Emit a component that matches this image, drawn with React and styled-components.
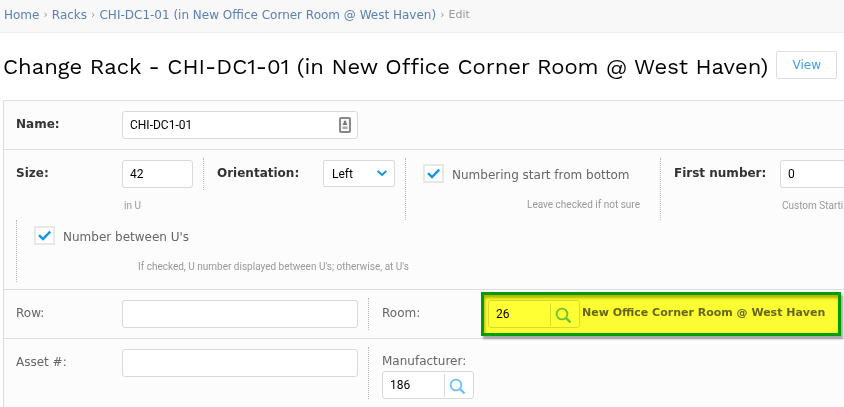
import React from 'react';
import styled, { createGlobalStyle } from 'styled-components';

const sans = '"DejaVu Sans", Verdana, sans-serif';
const field = 'Roboto, sans-serif';

const GlobalStyle = createGlobalStyle`
  *, *::before, *::after { box-sizing: border-box; }
  body {
    margin: 0;
    overflow-x: hidden;
    background: #fff;
    color: #666;
    font: 12px/16px ${sans};
  }
`;

const Breadcrumbs = styled.nav`
  display: flex;
  gap: 4px;
  padding: 7px 4px 9px;
  border-bottom: 1px solid #eee;
  background: #f8f8f8;
  color: #999;
  font-size: 11px;
  white-space: nowrap;
`;

const Crumb = styled.a`
  color: #5b80b2;
  font-size: 12px;
  text-decoration: none;
`;

const Header = styled.header`
  display: flex;
  align-items: flex-start;
  gap: 8px;
  padding: 18px 3px 17px;
`;

const Title = styled.h1`
  margin: 0;
  color: #000;
  font: 400 22px/32px "Work Sans", Inter, sans-serif;
  white-space: nowrap;
`;

const ViewButton = styled.button`
  width: 61px;
  height: 28px;
  padding: 0;
  border: 1px solid #ddd;
  border-radius: 2px;
  background: #fff;
  color: #3d9fe8;
  font: 12px ${sans};
`;

const Module = styled.form`
  margin-left: 3px;
  border: 1px solid #ddd;
  border-right: 0;
  border-radius: 2px 0 0 0;
  background: #fcfcfc;
`;

const Row = styled.div`
  padding: 8px 0 ${(p) => (p.$clip ? '7px' : '8px')} 12px;
  overflow: ${(p) => (p.$clip ? 'hidden' : 'visible')};
  & + & { border-top: 1px solid #ddd; }
`;

const Line = styled.div`
  display: flex;
  align-items: flex-start;
  min-height: ${(p) => (p.$tall ? '62px' : '32px')};
`;

const Cell = styled.div`
  flex: none;
  width: ${(p) => p.$width || 'auto'};
  min-height: ${(p) => (p.$tall ? '62px' : '32px')};
  padding: 2px 0 0 ${(p) => (p.$divided ? '13px' : '0')};
  border-left: ${(p) => (p.$divided ? '1px dotted #bbb' : '0')};
`;

const Field = styled.div`
  display: flex;
  flex-direction: ${(p) => (p.$stacked ? 'column' : 'row')};
  align-items: flex-start;
`;

const Label = styled.label`
  flex: none;
  width: 106px;
  padding-top: ${(p) => (p.$stacked ? '4px' : '5px')};
  padding-bottom: 2px;
  color: ${(p) => (p.$required ? '#333' : '#666')};
  font-weight: ${(p) => (p.$required ? 700 : 400)};
`;

const TextInput = styled.input`
  width: ${(p) => p.$width};
  height: 28px;
  padding: 0 7px;
  border: 1px solid #d9d9d9;
  border-radius: 3px;
  background: #fff;
  color: #000;
  font: 12px ${field};
`;

const Overlay = styled.span`
  display: inline-grid;
  align-items: center;
  justify-items: end;
  & > * { grid-area: 1 / 1; }
  & > svg { pointer-events: none; margin-right: ${(p) => p.$inset || '0'}; }
`;

const Select = styled.select`
  appearance: none;
  width: 72px;
  height: 27px;
  padding: 0 8px;
  border: 1px solid #d9d9d9;
  border-radius: 2px;
  background: #fff;
  color: #000;
  font: 12px ${field};
`;

const Checkbox = styled.input`
  appearance: none;
  width: 21px;
  height: 19px;
  margin: 0;
  border: 2px solid #e8e8e8;
  background: #fff;
  & + svg { visibility: hidden; }
  &:checked + svg { visibility: visible; }
`;

const CheckField = styled.div`
  display: flex;
  align-items: center;
  gap: 8px;
  padding: 4px 0 0 4px;
`;

const CheckLabel = styled.label`
  padding-top: 3px;
  white-space: nowrap;
`;

const Help = styled.p`
  margin: 0;
  padding: ${(p) => p.$pad};
  color: #999;
  font: 10px/14px ${field};
  white-space: nowrap;
`;

const Lookup = styled.div`
  display: flex;
  align-items: center;
  width: 92px;
  height: 28px;
  border: 1px solid #d9d9d9;
  border-radius: 3px;
  background: #fff;
`;

const LookupInput = styled.input`
  width: 61px;
  height: 26px;
  padding: 0 7px;
  border: 0;
  background: none;
  color: #000;
  font: 12px ${field};
`;

const LookupButton = styled.button`
  display: flex;
  width: 24px;
  height: 23px;
  padding: 4px 0 0 4px;
  border: 0;
  border-left: 1px solid #d9d9d9;
  background: none;
  color: #6fc1ef;
`;

const Highlighted = styled.div`
  position: relative;
  display: flex;
  gap: 2px;
`;

const Marker = styled.div`
  position: absolute;
  inset: -8px -16px -8px -7px;
  border: 3px solid #00a000;
  background: #ffff33;
  mix-blend-mode: multiply;
  box-shadow: 2px 3px 2px #aaa, inset 1px 3px 3px #b5b500;
  pointer-events: none;
`;

const RoomName = styled.strong`
  padding-top: 5px;
  color: #666;
  font-size: 11px;
  white-space: nowrap;
`;

function Tick() {
  return (
    <svg width="21" height="19" viewBox="0 0 21 19" fill="none" stroke="#1593e6" strokeWidth="2.4">
      <path d="M5 9.2 9 13l7.2-7.4" />
    </svg>
  );
}

function Chevron() {
  return (
    <svg width="10" height="7" viewBox="0 0 10 7" fill="none" stroke="#1593e6" strokeWidth="2">
      <path d="m.7 1 4.3 4 4.3-4" />
    </svg>
  );
}

function ContactIcon() {
  return (
    <svg width="12" height="16" viewBox="0 0 12 16">
      <rect x="1" y="1" width="10" height="14" rx="1" fill="#f8f8f8" stroke="#888" strokeWidth="2" />
      <path d="M6 3.5c1 0 1.3 1 1.2 2L8.5 8h-5l1.3-2.5c-.1-1 .2-2 1.2-2Z" fill="#777" />
      <path d="M3.5 9.5h5v2.5h-5z" fill="#aaa" />
    </svg>
  );
}

function Magnifier() {
  return (
    <svg width="17" height="17" viewBox="0 0 17 17" fill="none" stroke="currentColor" strokeWidth="1.8">
      <circle cx="7" cy="7" r="5.4" />
      <path d="m11 11 4.5 4.5" strokeWidth="2.4" />
    </svg>
  );
}

function CheckRow({ id, children }) {
  return (
    <CheckField>
      <Overlay>
        <Checkbox type="checkbox" id={id} defaultChecked />
        <Tick />
      </Overlay>
      <CheckLabel htmlFor={id}>{children}</CheckLabel>
    </CheckField>
  );
}

function LookupField({ id, value, title }) {
  return (
    <Lookup>
      <LookupInput id={id} defaultValue={value} />
      <LookupButton type="button" aria-label={title}>
        <Magnifier />
      </LookupButton>
    </Lookup>
  );
}

export default function App() {
  return (
    <>
      <GlobalStyle />
      <Breadcrumbs aria-label="Breadcrumb">
        <Crumb href="#home">Home</Crumb>
        <span>›</span>
        <Crumb href="#racks">Racks</Crumb>
        <span>›</span>
        <Crumb href="#rack">CHI-DC1-01 (in New Office Corner Room @ West Haven)</Crumb>
        <span>›</span>
        <span>Edit</span>
      </Breadcrumbs>
      <Header>
        <Title>Change Rack - CHI-DC1-01 (in New Office Corner Room @ West Haven)</Title>
        <ViewButton type="button">View</ViewButton>
      </Header>
      <Module>
        <Row>
          <Line>
            <Cell>
              <Field>
                <Label $required htmlFor="name">Name:</Label>
                <Overlay $inset="7px">
                  <TextInput id="name" $width="236px" defaultValue="CHI-DC1-01" />
                  <ContactIcon />
                </Overlay>
              </Field>
            </Cell>
          </Line>
        </Row>
        <Row $clip>
          <Line $tall>
            <Cell $width="187px" $tall>
              <Field>
                <Label $required htmlFor="size">Size:</Label>
                <TextInput id="size" $width="71px" defaultValue="42" />
              </Field>
              <Help $pad="11px 0 0 108px">in U</Help>
            </Cell>
            <Cell $width="202px" $divided>
              <Field>
                <Label $required htmlFor="orientation">Orientation:</Label>
                <Overlay $inset="8px">
                  <Select id="orientation" defaultValue="Left">
                    <option>Left</option>
                    <option>Right</option>
                  </Select>
                  <Chevron />
                </Overlay>
              </Field>
            </Cell>
            <Cell $width="255px" $divided $tall>
              <CheckRow id="from-bottom">Numbering start from bottom</CheckRow>
              <Help $pad="15px 0 0 108px">Leave checked if not sure</Help>
            </Cell>
            <Cell $divided $tall>
              <Field>
                <Label $required htmlFor="first">First number:</Label>
                <TextInput id="first" $width="71px" defaultValue="0" />
              </Field>
              <Help $pad="11px 0 0 108px">Custom Starti</Help>
            </Cell>
          </Line>
          <Line $tall>
            <Cell $divided $tall>
              <CheckRow id="between">Number between U's</CheckRow>
              <Help $pad="15px 0 0 108px">If checked, U number displayed between U's; otherwise, at U's</Help>
            </Cell>
          </Line>
        </Row>
        <Row>
          <Line>
            <Cell $width="352px">
              <Field>
                <Label htmlFor="row">Row:</Label>
                <TextInput id="row" $width="236px" />
              </Field>
            </Cell>
            <Cell $divided>
              <Field>
                <Label htmlFor="room">Room:</Label>
                <Highlighted>
                  <LookupField id="room" value="26" title="Look up room" />
                  <RoomName>New Office Corner Room @ West Haven</RoomName>
                  <Marker />
                </Highlighted>
              </Field>
            </Cell>
          </Line>
        </Row>
        <Row>
          <Line>
            <Cell $width="352px">
              <Field>
                <Label htmlFor="asset">Asset #:</Label>
                <TextInput id="asset" $width="236px" />
              </Field>
            </Cell>
            <Cell $divided>
              <Field $stacked>
                <Label $stacked htmlFor="manufacturer">Manufacturer:</Label>
                <LookupField id="manufacturer" value="186" title="Look up manufacturer" />
              </Field>
            </Cell>
          </Line>
        </Row>
      </Module>
    </>
  );
}
